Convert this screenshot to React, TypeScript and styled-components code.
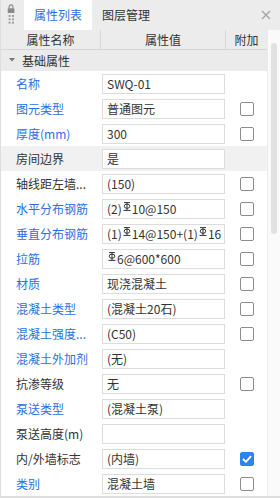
import React from 'react';
import styled, { createGlobalStyle } from 'styled-components';

const BLUE = '#2b6fe6';

type Row = {
  label: string;
  value: React.ReactNode;
  link?: boolean;
  check?: 'none' | 'off' | 'on';
  shaded?: boolean;
};

const Rebar = () => (
  <RebarMark viewBox="0 0 8 9" width="8" height="9">
    <line x1="1" y1="0.6" x2="7" y2="0.6" stroke="#333" strokeWidth="1" />
    <ellipse cx="4" cy="4.2" rx="2.8" ry="2.1" fill="none" stroke="#333" strokeWidth="1" />
    <line x1="4" y1="0.6" x2="4" y2="8.4" stroke="#333" strokeWidth="1" />
    <line x1="0.5" y1="8.4" x2="7.5" y2="8.4" stroke="#333" strokeWidth="1" />
  </RebarMark>
);

const rows: Row[] = [
  { label: '名称', value: 'SWQ-01', link: true, check: 'none' },
  { label: '图元类型', value: '普通图元', link: true, check: 'off' },
  { label: '厚度(mm)', value: '300', link: true, check: 'off' },
  { label: '房间边界', value: '是', check: 'none', shaded: true },
  { label: '轴线距左墙...', value: '(150)', check: 'off' },
  { label: '水平分布钢筋', value: <>(2)<Rebar />10@150</>, link: true, check: 'off' },
  { label: '垂直分布钢筋', value: <>(1)<Rebar />14@150+(1)<Rebar />16</>, link: true, check: 'off' },
  { label: '拉筋', value: <><Rebar />6@600*600</>, link: true, check: 'off' },
  { label: '材质', value: '现浇混凝土', link: true, check: 'off' },
  { label: '混凝土类型', value: '(混凝土20石)', link: true, check: 'off' },
  { label: '混凝土强度...', value: '(C50)', link: true, check: 'off' },
  { label: '混凝土外加剂', value: '(无)', link: true, check: 'none' },
  { label: '抗渗等级', value: '无', check: 'off' },
  { label: '泵送类型', value: '(混凝土泵)', link: true, check: 'none' },
  { label: '泵送高度(m)', value: '', check: 'none' },
  { label: '内/外墙标志', value: '(内墙)', check: 'on' },
  { label: '类别', value: '混凝土墙', link: true, check: 'off' },
];

const App = () => (
  <>
    <GlobalStyle />
    <Panel>
      <TabBar>
        <Grip>
          <svg width="24" height="30" viewBox="0 0 24 30">
            <rect x="7" y="8" width="7" height="5" rx="0.5" fill="#8a8a8a" />
            <path d="M8.5 8 V6.5 a2 2 0 0 1 4 0 V8" fill="none" stroke="#8a8a8a" strokeWidth="1.2" />
            {[15, 18.5, 22].map((y) => (
              <g key={y}>
                <rect x="8" y={y} width="2" height="2" fill="#9a9a9a" />
                <rect x="11.5" y={y} width="2" height="2" fill="#9a9a9a" />
              </g>
            ))}
          </svg>
        </Grip>
        <Tab active>属性列表</Tab>
        <Tab>图层管理</Tab>
        <Close>
          <svg width="10" height="10" viewBox="0 0 10 10">
            <path d="M1 1 L9 9 M9 1 L1 9" stroke="#a0a0a0" strokeWidth="1.1" />
          </svg>
        </Close>
      </TabBar>
      <Body>
        <Table>
          <Header>
            <HeadCell>属性名称</HeadCell>
            <HeadCell>属性值</HeadCell>
            <HeadCell last>附加</HeadCell>
          </Header>
          <Group>
            <Caret>
              <svg width="6" height="4" viewBox="0 0 6 4">
                <path d="M0 0 H6 L3 3.5 Z" fill="#777" />
              </svg>
            </Caret>
            基础属性
          </Group>
          {rows.map((r) => (
            <DataRow key={r.label} shaded={r.shaded}>
              <Label link={r.link}>{r.label}</Label>
              <ValueCell>
                <ValueBox>{r.value}</ValueBox>
              </ValueCell>
              <CheckCell>
                {r.check !== 'none' && (
                  <Check on={r.check === 'on'}>
                    {r.check === 'on' && (
                      <svg width="10" height="8" viewBox="0 0 10 8">
                        <path d="M1 4 L4 6.8 L9 1.2" fill="none" stroke="#fff" strokeWidth="1.8" />
                      </svg>
                    )}
                  </Check>
                )}
              </CheckCell>
            </DataRow>
          ))}
        </Table>
        <Gutter>
          <Thumb />
        </Gutter>
      </Body>
    </Panel>
  </>
);

const GlobalStyle = createGlobalStyle`
  html, body {
    margin: 0;
    padding: 0;
    background: #fff;
  }
  body {
    font-family: "Noto Sans CJK SC", "Noto Sans", sans-serif;
    font-size: 12px;
    color: #333;
  }
`;

const Panel = styled.div`
  width: 280px;
  height: 498px;
  overflow: hidden;
  display: flex;
  flex-direction: column;
  box-sizing: border-box;
  border-left: 1px solid #dedede;
  border-bottom: 2px solid #dedede;
  background: #fff;
`;

const TabBar = styled.div`
  height: 30px;
  flex-shrink: 0;
  display: flex;
  align-items: stretch;
  background: #ececec;
`;

const Grip = styled.div`
  width: 23px;
  display: flex;
`;

const Tab = styled.div<{ active?: boolean }>`
  display: flex;
  align-items: center;
  justify-content: center;
  padding: 0 10px;
  width: 68px;
  box-sizing: border-box;
  line-height: 30px;
  background: ${({ active }) => (active ? '#fff' : 'transparent')};
  color: ${({ active }) => (active ? BLUE : '#333')};
`;

const Close = styled.div`
  margin-left: auto;
  width: 28px;
  display: flex;
  align-items: center;
  justify-content: center;
`;

const Body = styled.div`
  flex: 1;
  display: flex;
  min-height: 0;
`;

const Table = styled.div`
  width: 266px;
  flex-shrink: 0;
  display: flex;
  flex-direction: column;
`;

const Header = styled.div`
  height: 23px;
  display: grid;
  grid-template-columns: 100px 125px 41px;
  background: #ececec;
  border-bottom: 1px solid #d6d6d6;
  box-sizing: border-box;
`;

const HeadCell = styled.div<{ last?: boolean }>`
  display: flex;
  align-items: center;
  justify-content: center;
  border-right: ${({ last }) => (last ? 'none' : '1px solid #d6d6d6')};
  color: #333;
`;

const Group = styled.div`
  height: 25px;
  display: flex;
  align-items: center;
  background: #ebebeb;
  padding-left: 8px;
  gap: 7px;
  color: #333;
`;

const Caret = styled.span`
  display: flex;
  align-items: center;
`;

const DataRow = styled.div<{ shaded?: boolean }>`
  height: 25px;
  flex-shrink: 0;
  display: grid;
  grid-template-columns: 100px 125px 41px;
  align-items: center;
  background: ${({ shaded }) => (shaded ? '#f1f1f1' : '#fff')};
`;

const Label = styled.div<{ link?: boolean }>`
  padding-left: 15px;
  white-space: nowrap;
  overflow: hidden;
  color: ${({ link }) => (link ? BLUE : '#333')};
`;

const ValueCell = styled.div`
  padding-left: 1px;
`;

const ValueBox = styled.div`
  height: 20px;
  width: 123px;
  box-sizing: border-box;
  border: 1px solid #dcdcdc;
  background: #fff;
  padding-left: 4px;
  display: flex;
  align-items: center;
  white-space: nowrap;
  overflow: hidden;
  color: #333;
`;

const RebarMark = styled.svg`
  flex-shrink: 0;
  margin: 0 1px 4px 1px;
`;

const CheckCell = styled.div`
  display: flex;
  justify-content: center;
`;

const Check = styled.div<{ on?: boolean }>`
  width: 14px;
  height: 14px;
  box-sizing: border-box;
  border-radius: 2px;
  border: 1px solid ${({ on }) => (on ? '#2f84ec' : '#8c8c8c')};
  background: ${({ on }) => (on ? '#2f84ec' : '#fff')};
  display: flex;
  align-items: center;
  justify-content: center;
`;

const Gutter = styled.div`
  flex: 1;
  padding: 13px 0 0 3px;
  border-left: 1px solid #ececec;
  background: #fafafa;
`;

const Thumb = styled.div`
  width: 6px;
  height: 191px;
  border-radius: 3px;
  background: #e1e1e1;
`;

export default App;
